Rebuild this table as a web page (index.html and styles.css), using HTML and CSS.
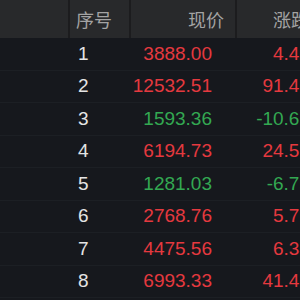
FILE: index.html
```html
<!DOCTYPE html>
<html lang="zh">
<head>
<meta charset="utf-8">
<link rel="stylesheet" href="styles.css">
</head>
<body>
<div class="table">
  <div class="row head">
    <div class="cell name"></div>
    <div class="cell idx">序号</div>
    <div class="cell price">现价</div>
    <div class="cell chg">涨跌幅</div>
  </div>
  <div class="row"><div class="cell name"></div><div class="cell idx">1</div><div class="cell price up">3888.00</div><div class="cell chg up">4.41</div></div>
  <div class="row"><div class="cell name"></div><div class="cell idx">2</div><div class="cell price up">12532.51</div><div class="cell chg up">91.43</div></div>
  <div class="row"><div class="cell name"></div><div class="cell idx">3</div><div class="cell price down">1593.36</div><div class="cell chg down">-10.62</div></div>
  <div class="row"><div class="cell name"></div><div class="cell idx">4</div><div class="cell price up">6194.73</div><div class="cell chg up">24.56</div></div>
  <div class="row"><div class="cell name"></div><div class="cell idx">5</div><div class="cell price down">1281.03</div><div class="cell chg down">-6.75</div></div>
  <div class="row"><div class="cell name"></div><div class="cell idx">6</div><div class="cell price up">2768.76</div><div class="cell chg up">5.71</div></div>
  <div class="row"><div class="cell name"></div><div class="cell idx">7</div><div class="cell price up">4475.56</div><div class="cell chg up">6.34</div></div>
  <div class="row"><div class="cell name"></div><div class="cell idx">8</div><div class="cell price up">6993.33</div><div class="cell chg up">41.42</div></div>
</div>
</body>
</html>
```
FILE: styles.css
```css
html, body {
  margin: 0;
  padding: 0;
  background: #16181d;
  overflow: hidden;
}
.table {
  width: 340px;
  font-family: "Liberation Sans", "Noto Sans CJK SC", sans-serif;
  font-size: 19px;
}
.row {
  display: grid;
  grid-template-columns: 70px 61px 106px 103px;
  height: 32.5px;
  border-bottom: 1px solid #1c1f24;
  box-sizing: border-box;
}
.row.head {
  height: 38px;
  background: #28292b;
  border-bottom: none;
  color: #a3a3a3;
  font-family: "Noto Sans CJK SC", sans-serif;
  font-size: 18px;
}
.cell {
  display: flex;
  align-items: center;
  white-space: nowrap;
  box-sizing: border-box;
}
.head .cell {
  border-right: 2px solid #1c1c1e;
}
.idx {
  padding-left: 8px;
  color: #e4e4e4;
}
.head .idx { color: #a3a3a3; padding-left: 6px; }
.price {
  justify-content: flex-end;
  padding-right: 25px;
}
.head .price { padding-right: 11px; }
.chg {
  justify-content: flex-end;
  padding-right: 30px;
}
.head .chg { padding-right: 12px; justify-content: flex-start; padding-left: 36px; }
.up { color: #e5393f; }
.down { color: #33a852; }
```
